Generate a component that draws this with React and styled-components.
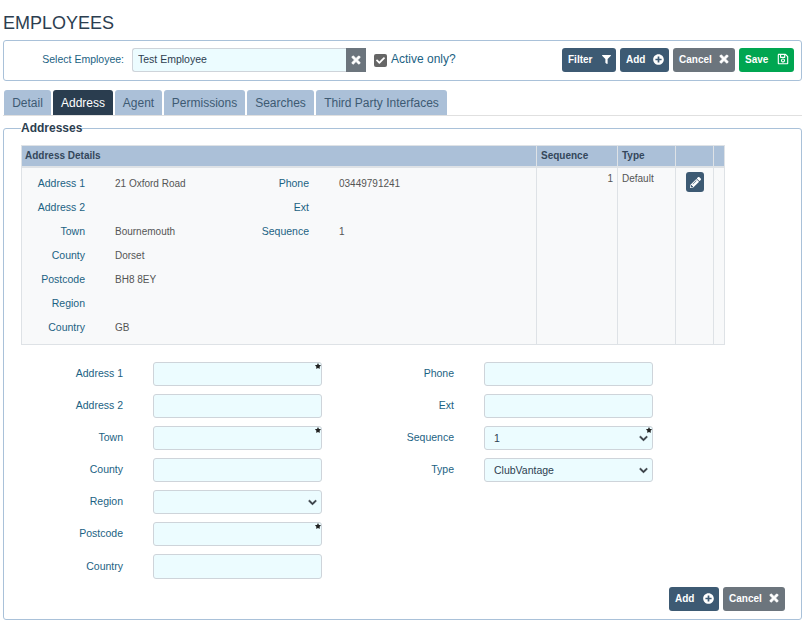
import React from 'react';
import styled, { createGlobalStyle } from 'styled-components';
import { FaFilter, FaPlusCircle, FaTimes, FaRegSave, FaPencilAlt, FaCheck, FaChevronDown, FaStar } from 'react-icons/fa';

const GlobalStyle = createGlobalStyle`
	html, body {
		margin: 0;
		background: #fff;
		font-family: 'Liberation Sans', Arial, sans-serif;
		font-size: 12px;
		color: #2c3e50;
	}
	* {
		box-sizing: border-box;
	}
`;

const Page = styled.main`
	width: 811px;
	height: 631px;
	padding: 14px 9px 0 3px;
	overflow: hidden;
`;

const Title = styled.h1`
	margin: 0 0 7px;
	font-size: 18px;
	line-height: 19px;
	font-weight: 400;
	color: #2c3e50;
`;

// * Top employee selector ////////////////
const SelectorPanel = styled.section`
	height: 41px;
	display: flex;
	align-items: center;
	padding: 0 7px 1px 0;
	border: 1px solid #a9c1d9;
	border-radius: 3px;
`;

const SelectorLabel = styled.label`
	width: 120px;
	margin: -2px 8px 0 0;
	text-align: right;
	font-size: 10.5px;
	color: #1b6283;
`;

const EmployeeInput = styled.input`
	width: 214px;
	height: 24px;
	padding: 0 5px 2px;
	font: 10.5px 'Liberation Sans', Arial, sans-serif;
	color: #2c3e50;
	background: #ecfcff;
	border: 1px solid #ced4da;
	border-right: 0;
	border-radius: 3px 0 0 3px;
	outline: none;
`;

const BoldTimes = styled(FaTimes)`
	stroke: currentColor;
	stroke-width: 30;
`;

const ClearButton = styled.button`
	width: 20px;
	height: 24px;
	padding: 0;
	display: flex;
	align-items: center;
	justify-content: center;
	color: #fff;
	background: #6c757d;
	border: 0;
	font-size: 12px;
`;

const CheckBox = styled.span`
	width: 13px;
	height: 13px;
	margin: 1px 4px 0 8px;
	display: flex;
	align-items: center;
	justify-content: center;
	color: #fff;
	background: #666;
	border-radius: 2px;
	font-size: 9px;
`;

const ActiveLabel = styled.span`
	font-size: 12px;
	color: #1b6283;
	margin-top: -2px;
`;

const Actions = styled.div`
	display: flex;
	justify-content: flex-end;
	gap: 4px;
	margin-left: auto;
`;

const ActionButton = styled.button`
	height: 24px;
	padding: 0 5px 2px 6px;
	display: flex;
	align-items: center;
	justify-content: space-between;
	width: ${(props) => props.$width}px;
	color: #fff;
	background: ${(props) => props.$color || '#3d5a73'};
	border: 0;
	border-radius: 3px;
	font: bold 10px 'Liberation Sans', Arial, sans-serif;
`;

const ButtonIcon = styled.span`
	display: flex;
	font-size: ${(props) => props.$size || 11}px;
`;

// * Tabs ////////////////
const TabBar = styled.nav`
	display: flex;
	gap: 2px;
	height: 26px;
	margin-top: 9px;
	padding-left: 1px;
	border-bottom: 1px solid #e0e0e0;
`;

const Tab = styled.div`
	width: ${(props) => props.$width}px;
	height: 25px;
	display: flex;
	align-items: center;
	justify-content: center;
	font-size: 12px;
	color: ${(props) => (props.$active ? '#fff' : '#3d5a73')};
	background: ${(props) => (props.$active ? '#2a3d4f' : '#abc0d8')};
	border-radius: 3px 3px 0 0;
`;

// * Addresses fieldset ////////////////
const Group = styled.fieldset`
	height: 499px;
	margin: 5px 0 0;
	padding: 10px 17px 0;
	border: 1px solid #a9c1d9;
	border-radius: 3px;
	position: relative;
	min-width: 0;
`;

const Legend = styled.legend`
	padding: 0;
	margin-left: 0;
	font-size: 12px;
	font-weight: bold;
	line-height: 14px;
	color: #2c3e50;
`;

const GridTable = styled.div`
	width: 704px;
	height: 200px;
	display: grid;
	grid-template-columns: 514px 80px 57px 37px 1fr;
	grid-template-rows: 20px 1fr;
	column-gap: 1px;
	row-gap: 2px;
	background: #dee2e6;
	padding: 1px;
`;

const HeadCell = styled.div`
	display: flex;
	align-items: center;
	padding: 0 ${(props) => props.$inset || 4}px 1px;
	font-size: 10px;
	font-weight: bold;
	color: #33475b;
	background: #abc0d8;
`;

const BodyCell = styled.div`
	padding: 5px 4px;
	font-size: 10px;
	color: #555;
	background: #f8f9fa;
	text-align: ${(props) => (props.$right ? 'right' : 'left')};
`;

const DetailCell = styled.div`
	padding: 3px 0 0;
	background: #f8f9fa;
	display: grid;
	grid-template-columns: 224px 1fr;
`;

const DetailColumn = styled.div`
	display: flex;
	flex-direction: column;
`;

const DetailRow = styled.div`
	height: 24px;
	display: grid;
	grid-template-columns: 63px 1fr;
	column-gap: 30px;
	align-items: center;
`;

const DetailLabel = styled.span`
	text-align: right;
	font-size: 10.5px;
	color: #1b6283;
`;

const DetailValue = styled.span`
	font-size: 10px;
	color: #555;
`;

const EditButton = styled.button`
	width: 18px;
	height: 20px;
	margin: -1px 0 0 6px;
	padding: 0;
	display: flex;
	align-items: center;
	justify-content: center;
	color: #fff;
	background: #3d5a73;
	border: 0;
	border-radius: 3px;
	font-size: 11px;
`;

// * Edit form ////////////////
const Form = styled.form`
	display: grid;
	grid-template-columns: 331px 331px;
	margin-top: 17px;
`;

const FormColumn = styled.div`
	display: flex;
	flex-direction: column;
	gap: 8px;
`;

const FormRow = styled.div`
	display: grid;
	grid-template-columns: 102px 169px;
	column-gap: 30px;
	align-items: center;
`;

const FormLabel = styled.label`
	padding-bottom: 2px;
	text-align: right;
	font-size: 10.5px;
	color: #1b6283;
`;

const FieldWrap = styled.div`
	position: relative;
	height: ${(props) => props.$height || 24}px;
`;

const TextInput = styled.input`
	width: 100%;
	height: 100%;
	padding: 0 9px 1px;
	display: block;
	font: 10.5px 'Liberation Sans', Arial, sans-serif;
	color: #2c3e50;
	background: #ecfcff;
	border: 1px solid #ced4da;
	border-radius: 3px;
	outline: none;
`;

const SelectInput = styled(TextInput).attrs({ as: 'select' })`
	appearance: none;
`;

const Chevron = styled(FaChevronDown)`
	position: absolute;
	right: 5px;
	top: 8px;
	font-size: 9px;
	color: #343a40;
	stroke: currentColor;
	stroke-width: 30;
	pointer-events: none;
`;

const Required = styled(FaStar)`
	position: absolute;
	right: 1px;
	top: 1px;
	font-size: 6px;
	color: #222;
`;

const FormFooter = styled.div`
	display: flex;
	justify-content: flex-end;
	gap: 4px;
	position: absolute;
	right: 16px;
	bottom: 8px;
`;

const details = [
	['Address 1', '21 Oxford Road'],
	['Address 2', ''],
	['Town', 'Bournemouth'],
	['County', 'Dorset'],
	['Postcode', 'BH8 8EY'],
	['Region', ''],
	['Country', 'GB'],
];

const contact = [
	['Phone', '03449791241'],
	['Ext', ''],
	['Sequence', '1'],
];

const tabs = [
	['Detail', 47],
	['Address', 60],
	['Agent', 47],
	['Permissions', 81],
	['Searches', 67],
	['Third Party Interfaces', 131],
];

const Field = ({ label, required, options, height }) => (
	<FormRow>
		<FormLabel>{label}</FormLabel>
		<FieldWrap $height={height}>
			{options ? (
				<>
					<SelectInput defaultValue={options[0]}>
						{options.map((o) => (
							<option key={o}>{o}</option>
						))}
					</SelectInput>
					<Chevron />
				</>
			) : (
				<TextInput />
			)}
			{required && <Required />}
		</FieldWrap>
	</FormRow>
);

export default function App() {
	return (
		<Page>
			<GlobalStyle />
			<Title>EMPLOYEES</Title>
			<SelectorPanel>
				<SelectorLabel>Select Employee:</SelectorLabel>
				<EmployeeInput defaultValue="Test Employee" />
				<ClearButton>
					<BoldTimes />
				</ClearButton>
				<CheckBox>
					<FaCheck />
				</CheckBox>
				<ActiveLabel>Active only?</ActiveLabel>
				<Actions>
					<ActionButton $width={54}>
						Filter
						<ButtonIcon $size={9}>
							<FaFilter />
						</ButtonIcon>
					</ActionButton>
					<ActionButton $width={49}>
						Add
						<ButtonIcon>
							<FaPlusCircle />
						</ButtonIcon>
					</ActionButton>
					<ActionButton $width={62} $color="#6c757d">
						Cancel
						<ButtonIcon $size={12}>
							<BoldTimes />
						</ButtonIcon>
					</ActionButton>
					<ActionButton $width={55} $color="#00a651">
						Save
						<ButtonIcon $size={12}>
							<FaRegSave />
						</ButtonIcon>
					</ActionButton>
				</Actions>
			</SelectorPanel>

			<TabBar>
				{tabs.map(([name, width]) => (
					<Tab key={name} $width={width} $active={name === 'Address'}>
						{name}
					</Tab>
				))}
			</TabBar>

			<Group>
				<Legend>Addresses</Legend>
				<GridTable>
					<HeadCell $inset={3}>Address Details</HeadCell>
					<HeadCell>Sequence</HeadCell>
					<HeadCell>Type</HeadCell>
					<HeadCell />
					<HeadCell />
					<DetailCell>
						<DetailColumn>
							{details.map(([label, value]) => (
								<DetailRow key={label}>
									<DetailLabel>{label}</DetailLabel>
									<DetailValue>{value}</DetailValue>
								</DetailRow>
							))}
						</DetailColumn>
						<DetailColumn>
							{contact.map(([label, value]) => (
								<DetailRow key={label}>
									<DetailLabel>{label}</DetailLabel>
									<DetailValue>{value}</DetailValue>
								</DetailRow>
							))}
						</DetailColumn>
					</DetailCell>
					<BodyCell $right>1</BodyCell>
					<BodyCell>Default</BodyCell>
					<BodyCell>
						<EditButton>
							<FaPencilAlt />
						</EditButton>
					</BodyCell>
					<BodyCell />
				</GridTable>

				<Form>
					<FormColumn>
						<Field label="Address 1" required />
						<Field label="Address 2" />
						<Field label="Town" required />
						<Field label="County" />
						<Field label="Region" options={['']} />
						<Field label="Postcode" required />
						<Field label="Country" height={25} />
					</FormColumn>
					<FormColumn>
						<Field label="Phone" />
						<Field label="Ext" />
						<Field label="Sequence" required options={['1']} />
						<Field label="Type" options={['ClubVantage']} />
					</FormColumn>
				</Form>

				<FormFooter>
					<ActionButton $width={50}>
						Add
						<ButtonIcon>
							<FaPlusCircle />
						</ButtonIcon>
					</ActionButton>
					<ActionButton $width={62} $color="#6c757d">
						Cancel
						<ButtonIcon $size={12}>
							<BoldTimes />
						</ButtonIcon>
					</ActionButton>
				</FormFooter>
			</Group>
		</Page>
	);
}
